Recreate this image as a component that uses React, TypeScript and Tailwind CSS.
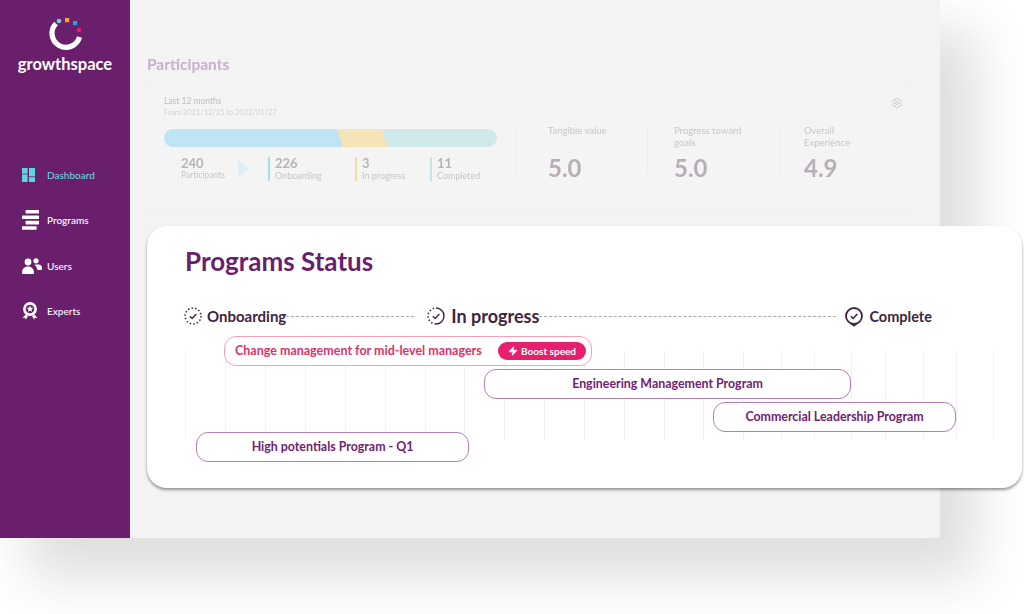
import React from "react";
import { Settings, Zap } from "lucide-react";

const nav = [
	{ label: "Dashboard", icon: <DashboardIcon />, active: true, gap: "mt-[91px]" },
	{ label: "Programs", icon: <ProgramsIcon />, active: false, gap: "mt-[25px]" },
	{ label: "Users", icon: <UsersIcon />, active: false, gap: "mt-[26px]" },
	{ label: "Experts", icon: <ExpertsIcon />, active: false, gap: "mt-[25px]" },
];

const steps = [
	{ value: "226", label: "Onboarding", bar: "border-[#a9dcf3]", width: "w-[87px]" },
	{ value: "3", label: "In progress", bar: "border-[#f3dc9c]", width: "w-[75px]" },
	{ value: "11", label: "Completed", bar: "border-[#bfe4ea]", width: "w-[60px]" },
];

const metrics = [
	{ label: "Tangible value", value: "5.0", width: "w-[131px]", pad: "pl-[31px]", text: "w-[80px]" },
	{ label: "Progress toward goals", value: "5.0", width: "w-[133px]", pad: "pl-[26px]", text: "w-[80px]" },
	{ label: "Overall Experience", value: "4.9", width: "w-[125px]", pad: "pl-[23px]", text: "w-[55px]" },
];

const programs = [
	{ name: "Engineering Management Program", box: "mt-[3px] ml-[299px] w-[367px] h-[30px]" },
	{ name: "Commercial Leadership Program", box: "mt-[3px] ml-[528px] w-[243px] h-[30px]" },
	{ name: "High potentials Program - Q1", box: "ml-[11px] w-[273px] h-[30px]" },
];

function DashboardIcon() {
	return (
		<svg viewBox="0 0 13 14" className="h-[14px] w-[13px] fill-[#5fd6de]">
			<rect x="0" y="0" width="5.6" height="5.6" />
			<rect x="0" y="6.4" width="5.6" height="7.6" />
			<rect x="7" y="0" width="6" height="8.4" />
			<rect x="7" y="9.2" width="6" height="4.8" />
		</svg>
	);
}

function ProgramsIcon() {
	return (
		<svg viewBox="0 0 17 20" className="h-5 w-[17px] fill-white">
			<rect x="3.6" y="0" width="13.4" height="3.6" rx="0.6" />
			<rect x="0" y="5.4" width="17" height="3.6" rx="0.6" />
			<rect x="3.6" y="10.8" width="13.4" height="3.6" rx="0.6" />
			<rect x="0" y="16.2" width="14.6" height="3.6" rx="0.6" />
		</svg>
	);
}

function UsersIcon() {
	return (
		<svg viewBox="0 0 20 16" className="h-4 w-5 fill-white">
			<circle cx="6" cy="4" r="3.4" />
			<path d="M0 15.2c0-4.4 2.4-6.6 6-6.6s6 2.2 6 6.6c0 .5-.4.8-.8.8H.8c-.4 0-.8-.3-.8-.8z" />
			<circle cx="14" cy="2.8" r="2.6" />
			<path d="M12.4 6.4h4.2c2 0 3.4 1.4 3.4 3.2v1.6c0 .5-.3.8-.8.8h-3.8c-.4-2.4-1.4-4.2-3-5.6z" />
		</svg>
	);
}

function ExpertsIcon() {
	return (
		<svg viewBox="0 0 16 18" className="h-[18px] w-4">
			<circle cx="8" cy="7" r="5.6" fill="none" stroke="#fff" strokeWidth="2.6" />
			<path d="M8 3.6l1 2.2 2.3.2-1.8 1.5.6 2.3L8 8.6l-2.1 1.2.6-2.3L4.7 6 7 5.8z" fill="#fff" />
			<path d="M3.4 12.6L.6 16l2.4-.2.8 1.8L6 14.2zM12.6 12.6l2.8 3.4-2.4-.2-.8 1.8L10 14.2z" fill="#fff" />
		</svg>
	);
}

function Logo() {
	return (
		<div className="mt-[17px] flex flex-col items-center">
			<svg viewBox="0 0 40 36" className="h-[36px] w-[40px]">
				<path d="M11 6.5A14 14 0 1 0 34.5 20" fill="none" stroke="#fff" strokeWidth="5.2" />
				<circle cx="14" cy="4" r="2.3" fill="#5fd6de" />
				<rect x="20" y="1" width="4.2" height="4.2" fill="#f5a81c" />
				<rect x="28" y="4" width="4.2" height="4.2" fill="#1fa8e0" />
				<circle cx="34" cy="13" r="2.2" fill="#e6206f" />
			</svg>
			<p className="mt-[1px] text-[16.5px] font-bold leading-5 text-white">growthspace</p>
		</div>
	);
}

function DottedCheck({ partial }: { partial?: boolean }) {
	return (
		<svg viewBox="0 0 18 18" className="h-[18px] w-[18px] shrink-0 fill-none stroke-[#3f2440]">
			{partial ? (
				<>
					<path d="M9 1a8 8 0 0 1 0 16" strokeWidth="1.4" />
					<path d="M9 17a8 8 0 0 1-8-8 8 8 0 0 1 8-8" strokeWidth="1.6" strokeDasharray="1.4 2.2" />
				</>
			) : (
				<circle cx="9" cy="9" r="8" strokeWidth="1.6" strokeDasharray="1.4 2.2" />
			)}
			<path d="M5.8 9.2l2.3 2.2 4.2-4.4" strokeWidth="1.4" />
		</svg>
	);
}

function PinCheck() {
	return (
		<svg viewBox="0 0 18 20" className="h-5 w-[18px] shrink-0 fill-none stroke-[#3f2440]">
			<circle cx="9" cy="9" r="8" strokeWidth="1.8" />
			<path d="M6 17l3 2.6 3-2.6z" fill="#3f2440" strokeWidth="0.5" />
			<path d="M5.8 9.2l2.3 2.2 4.2-4.4" strokeWidth="1.5" />
		</svg>
	);
}

function Line({ width }: { width: string }) {
	return <div className={`${width} border-t border-dashed border-[#a9a9a9]`} />;
}

export default function App() {
	return (
		<main className="relative h-[614px] w-[1024px] overflow-hidden bg-white font-['Lato',sans-serif]">
			<div className="flex h-[538px] w-[940px] bg-[#f3f3f3] shadow-[32px_35px_50px_5px_rgba(0,0,0,0.13)]">
				<aside className="flex w-[130px] shrink-0 flex-col bg-[#6a1f6c]">
					<Logo />
					<nav className="flex flex-col">
						{nav.map((item) => (
							<div key={item.label} className={`flex h-5 items-center ${item.gap} pl-[22px]`}>
								<span className="flex w-[25px] items-center">{item.icon}</span>
								<span className={`text-[10px] font-medium ${item.active ? "text-[#5fd6de]" : "text-white"}`}>{item.label}</span>
							</div>
						))}
					</nav>
				</aside>

				<section className="flex-1 pl-[17px] pr-[28px] pt-[55px] blur-[0.5px]">
					<h2 className="text-[15.5px] font-bold leading-[18px] text-[#cbaed0]">Participants</h2>
					<div className="mt-[10px] flex h-[126px] rounded-[3px] border border-[#f0f0f0] bg-[#f4f4f4] pl-[16px]">
						<div className="w-[333px] pt-[12px]">
							<p className="text-[8.5px] leading-[11px] text-[#bdbdbd]">Last 12 months</p>
							<p className="text-[7.5px] leading-[11px] text-[#d2d2d2]">From 2021/12/25 to 2022/01/27</p>
							<div className="mt-[11px] flex h-[18px] overflow-hidden rounded-full bg-[#d0e9ea]">
								<div className="-ml-[10px] w-[186px] skew-x-[18deg] bg-[#bfe4f5]" />
								<div className="w-[45px] skew-x-[18deg] bg-[#f5e4b8]" />
							</div>
							<div className="mt-[10px] flex h-[24px] items-center">
								<div className="ml-[17px] w-[57px]">
									<p className="text-[13px] font-bold leading-[13px] text-[#b5b5b5]">240</p>
									<p className="text-[8.5px] leading-[11px] text-[#c6c6c6]">Participants</p>
								</div>
								<div className="h-0 w-[30px] border-y-[9px] border-l-[11px] border-y-transparent border-l-[#dceff7]" />
								{steps.map((s) => (
									<div key={s.label} className={`${s.width} border-l-2 ${s.bar} pl-[5px]`}>
										<p className="text-[13px] font-bold leading-[13px] text-[#b5b5b5]">{s.value}</p>
										<p className="text-[9px] leading-[11px] text-[#c6c6c6]">{s.label}</p>
									</div>
								))}
							</div>
						</div>
						<div className="relative ml-[19px] flex flex-1 pt-[41px]">
							{metrics.map((m) => (
								<div key={m.label} className={`${m.width} ${m.pad} h-[47px] border-l border-[#ececec]`}>
									<p className={`h-[24px] ${m.text} text-[9.5px] leading-[12px] text-[#c9c4c9]`}>{m.label}</p>
									<p className="mt-[6px] text-[24px] font-bold leading-[26px] text-[#b8aeb8]">{m.value}</p>
								</div>
							))}
							<Settings className="absolute right-[8px] top-[13px] h-[12px] w-[12px] text-[#cfcfcf]" />
						</div>
					</div>
				</section>
			</div>

			<div className="absolute left-[147px] top-[226px] h-[262px] w-[875px] rounded-[20px] bg-white pl-[38px] pt-[20px] shadow-[0_2px_3px_rgba(0,0,0,0.4)]">
				<h1 className="text-[26px] font-bold leading-[30px] text-[#6a1f6c]">Programs Status</h1>

				<div className="-ml-[1px] mt-[30px] flex h-5 items-center text-[#3f2440]">
					<DottedCheck />
					<span className="ml-[5px] text-[15px] font-bold">Onboarding</span>
					<Line width="w-[128px]" />
					<span className="ml-[13px]"><DottedCheck partial /></span>
					<span className="ml-[6px] text-[18px] font-bold">In progress</span>
					<Line width="w-[297px]" />
					<span className="ml-[9px] translate-y-[1px]"><PinCheck /></span>
					<span className="ml-[6px] translate-y-[1px] text-[14.5px] font-bold">Complete</span>
				</div>

				<div className="relative mt-[10px] h-[125px]">
					<div className="absolute left-0 top-[15px] grid h-[89px] grid-cols-[40px_40px_40px_40px_40px_40px_39px_40px_40px_40px_40px_40px_39px_40px_38px_33px_37px_34px_38px_33px_37px_1px]">
						{Array.from({ length: 22 }, (_, i) => (
							<div key={i} className="border-l border-[#f1f1f1]" />
						))}
					</div>
					<div className="relative flex flex-col">
						<div className="ml-[39px] flex h-[30px] w-[368px] items-center justify-between rounded-[12px] border border-[#f4a1b5] bg-white pl-[10px] pr-[5px]">
							<span className="text-[12.5px] font-bold text-[#e0316b]">Change management for mid-level managers</span>
							<span className="flex h-[18px] w-[88px] items-center justify-center gap-[3px] rounded-full bg-[#e6206f] text-[10px] font-bold text-white">
								<Zap className="h-[10px] w-[10px] fill-white" />
								Boost speed
							</span>
						</div>
						{programs.map((p) => (
							<div key={p.name} className={`${p.box} flex items-center justify-center rounded-[12px] border border-[#b27fb6] bg-white text-[12.4px] font-bold text-[#6f2273]`}>
								{p.name}
							</div>
						))}
					</div>
				</div>
			</div>
		</main>
	);
}
